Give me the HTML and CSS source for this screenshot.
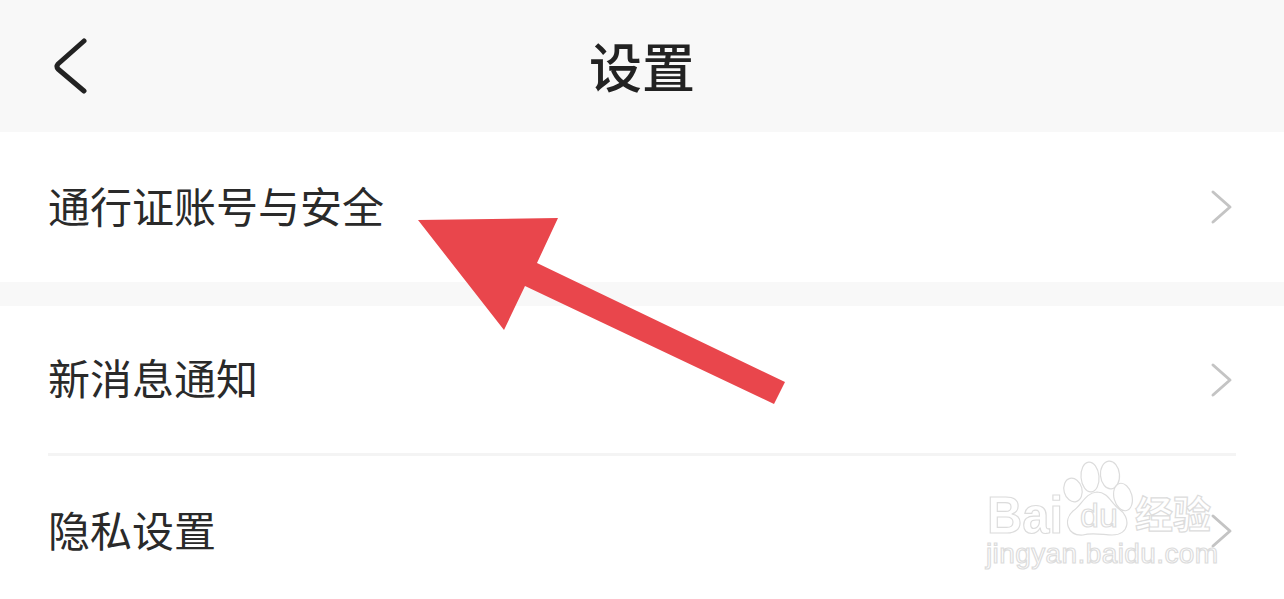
FILE: index.html
```html
<!DOCTYPE html>
<html lang="zh-CN">
<head>
    <meta charset="UTF-8">
    <title>设置</title>
    <link rel="stylesheet" href="styles.css">
</head>
<body>
    <div class="page">
        <header class="header">
            <svg class="back" width="36" height="56" viewBox="0 0 36 56">
                <path d="M31 3 L5 26 Q3 28.500 5 31 L31 53" fill="none" stroke="#222" stroke-width="5" stroke-linecap="round" stroke-linejoin="round"/>
            </svg>
            <h1 class="title">设置</h1>
        </header>

        <div class="row row-first">
            <span class="label">通行证账号与安全</span>
            <svg class="chevron" width="24" height="36" viewBox="0 0 24 36"><path d="M3 3 L20 18 L3 33" /></svg>
        </div>

        <div class="group">
            <div class="row row-second">
                <span class="label">新消息通知</span>
                <svg class="chevron" width="24" height="36" viewBox="0 0 24 36"><path d="M3 3 L20 18 L3 33" /></svg>
            </div>
            <div class="row row-third">
                <span class="label">隐私设置</span>
                <svg class="chevron" width="24" height="36" viewBox="0 0 24 36"><path d="M3 3 L20 18 L3 33" /></svg>
            </div>
        </div>

        <!-- red arrow drawn over the screenshot -->
        <svg class="arrow" width="1284" height="599" viewBox="0 0 1284 599">
            <polygon points="418,220 558,218 537,263 785,382 774,404 525,286 504,330" fill="#e9464c"/>
        </svg>

        <!-- watermark -->
        <svg class="watermark" width="300" height="130" viewBox="0 0 300 130">
            <g class="wm-line">
                <ellipse cx="113" cy="42" rx="9" ry="12" transform="rotate(-15 113 42)"/>
                <ellipse cx="130" cy="29" rx="9" ry="15" transform="rotate(-5 130 29)"/>
                <ellipse cx="150" cy="27" rx="9.500" ry="14" transform="rotate(-5 150 27)"/>
                <ellipse cx="163" cy="49" rx="9" ry="14" transform="rotate(-15 163 49)"/>
                <path d="M137 44 C148 44 151 55 159 61 C171 69 170 87 152 87 C144 87 132 84 123 87 C107 88 103 72 113 63 C122 57 125 45 137 44 Z"/>
            </g>
            <text class="wm-big" x="27" y="85" textLength="76" lengthAdjust="spacingAndGlyphs">Bai</text>
            <text class="wm-du" x="120" y="79">du</text>
            <text class="wm-cn" x="175" y="80">经验</text>
            <text class="wm-url" x="26" y="115">jingyan.baidu.com</text>
        </svg>
    </div>
</body>
</html>
```

FILE: styles.css
```css
html, body {
    margin: 0;
    padding: 0;
}
body {
    background: #fff;
    font-family: "Noto Sans CJK SC", "Liberation Sans", sans-serif;
    color: #222;
    overflow: hidden;
}
.page {
    position: relative;
    width: 1284px;
    height: 599px;
    overflow: hidden;
}
.header {
    height: 132px;
    background: #f8f8f8;
    display: flex;
    align-items: center;
    justify-content: center;
    position: relative;
}
.back {
    position: absolute;
    left: 53px;
    top: 38px;
}
.title {
    margin: 0 0 2px;
    font-size: 53px;
    line-height: 130px;
    font-weight: 500;
    color: #222;
}
.row {
    display: flex;
    align-items: center;
    justify-content: space-between;
    margin: 0 48px;
    font-size: 42px;
    font-weight: 400;
    color: #2a2a2a;
}
.label {
    margin-bottom: 6px;
}
.row-first {
    height: 150px;
}
.row-second {
    height: 147px;
    border-bottom: 3px solid #f4f4f4;
}
.row-third {
    height: 150px;
}
.chevron {
    margin-right: 2px;
}
.chevron path {
    fill: none;
    stroke: #c4c4c4;
    stroke-width: 3;
    stroke-linecap: round;
    stroke-linejoin: round;
}
/* gap between the groups */
.group::before {
    content: "";
    display: block;
    height: 24px;
    background: #f8f8f8;
}
.arrow {
    position: absolute;
    left: 0;
    top: 0;
}
.watermark {
    position: absolute;
    left: 960px;
    top: 448px;
}
.watermark text, .wm-line {
    fill: rgba(255,255,255,0.6);
    stroke: #dcdcdc;
    stroke-width: 1.200;
}
.wm-big {
    font-family: "Liberation Sans", sans-serif;
    font-size: 52px;
    font-weight: 700;
}
.wm-du {
    font-family: "Liberation Sans", sans-serif;
    font-size: 34px;
}
.wm-cn {
    font-size: 38px;
    font-weight: 700;
}
.wm-url {
    font-family: "Liberation Sans", sans-serif;
    font-size: 28px;
    letter-spacing: 0.400px;
}
```
